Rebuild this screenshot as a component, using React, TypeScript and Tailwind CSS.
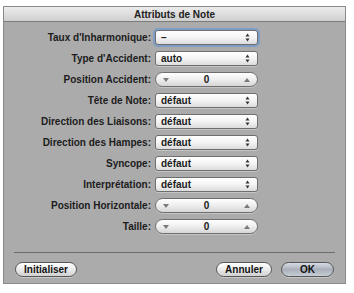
import React from "react";

type Row = { label: string; kind: "popup" | "stepper"; value: string; focus?: boolean };

const rows: Row[] = [
  { label: "Taux d'Inharmonique:", kind: "popup", value: "–", focus: true },
  { label: "Type d'Accident:", kind: "popup", value: "auto" },
  { label: "Position Accident:", kind: "stepper", value: "0" },
  { label: "Tête de Note:", kind: "popup", value: "défaut" },
  { label: "Direction des Liaisons:", kind: "popup", value: "défaut" },
  { label: "Direction des Hampes:", kind: "popup", value: "défaut" },
  { label: "Syncope:", kind: "popup", value: "défaut" },
  { label: "Interprétation:", kind: "popup", value: "défaut" },
  { label: "Position Horizontale:", kind: "stepper", value: "0" },
  { label: "Taille:", kind: "stepper", value: "0" },
];

function Popup({ value, focus }: { value: string; focus?: boolean }) {
  return (
    <div
      className={
        "flex h-[15px] w-[103px] items-center justify-between rounded-[3px] border border-[#6e6e6e] bg-gradient-to-b from-[#ffffff] via-[#f4f4f4] to-[#dcdcdc] pl-[5px] pr-[7px] " +
        (focus ? "shadow-[0_0_0_2px_#7d9ec4]" : "shadow-[0_1px_0_#c4c4c4]")
      }
    >
      <span className="text-[10px] leading-none font-bold text-[#1a1a1a]">{value}</span>
      <svg width="5" height="9" viewBox="0 0 5 9">
        <path d="M0.5 3.5 L2.5 0.5 L4.5 3.5 Z" fill="#333" />
        <path d="M0.5 5.5 L2.5 8.5 L4.5 5.5 Z" fill="#333" />
      </svg>
    </div>
  );
}

function Stepper({ value }: { value: string }) {
  return (
    <div className="flex h-[15px] w-[103px] items-center justify-between rounded-full border border-[#6e6e6e] bg-gradient-to-b from-[#ffffff] via-[#eeeeee] to-[#d6d6d6] px-[7px] shadow-[0_1px_0_#c4c4c4]">
      <svg width="6" height="4" viewBox="0 0 6 4">
        <path d="M0 0 L6 0 L3 4 Z" fill="#7a7a7a" />
      </svg>
      <span className="text-[10px] leading-none font-bold text-[#1a1a1a]">{value}</span>
      <svg width="6" height="4" viewBox="0 0 6 4">
        <path d="M0 4 L6 4 L3 0 Z" fill="#7a7a7a" />
      </svg>
    </div>
  );
}

function Button({ label, primary, width }: { label: string; primary?: boolean; width: string }) {
  return (
    <div
      className={
        "flex h-[15px] items-center justify-center rounded-full border border-[#555] text-[10px] leading-none font-bold text-[#111] shadow-[0_1px_0_#c8c8c8] " +
        width +
        (primary
          ? " bg-gradient-to-b from-[#d8dde4] via-[#a9b0ba] to-[#c8ced6]"
          : " bg-gradient-to-b from-[#ffffff] via-[#ebebeb] to-[#d0d0d0]")
      }
    >
      {label}
    </div>
  );
}

export default function App() {
  return (
    <div
      className="h-[293px] w-[354px] bg-white pl-[3px] pt-[6px]"
      style={{ fontFamily: '"Liberation Sans", Arial, sans-serif' }}
    >
      <div className="flex h-[278px] w-[343px] flex-col border border-[#8a8a8a] bg-[#ababab]">
        {/* title bar */}
        <div className="flex h-[15px] items-center justify-center border-b border-[#7c7c7c] bg-gradient-to-b from-[#ececec] to-[#cfcfcf] text-[10px] font-bold text-[#222]">
          Attributs de Note
        </div>

        <div className="flex flex-col gap-[6px] pt-[8px]">
          {rows.map((r) => (
            <div key={r.label} className="flex h-[15px] items-center">
              <div className="w-[151px] pr-[4px] text-right text-[10px] leading-none font-bold text-[#1c1c1c]">
                {r.label}
              </div>
              {r.kind === "popup" ? <Popup value={r.value} focus={r.focus} /> : <Stepper value={r.value} />}
            </div>
          ))}
        </div>

        <div className="mx-[10px] mt-[18px] border-t border-[#6c6c6c]" />

        <div className="mt-[9px] flex items-center px-[11px]">
          <Button label="Initialiser" width="w-[62px]" />
          <div className="flex-1" />
          <Button label="Annuler" width="w-[56px]" />
          <div className="w-[9px]" />
          <Button label="OK" primary width="w-[53px]" />
        </div>
      </div>
    </div>
  );
}
